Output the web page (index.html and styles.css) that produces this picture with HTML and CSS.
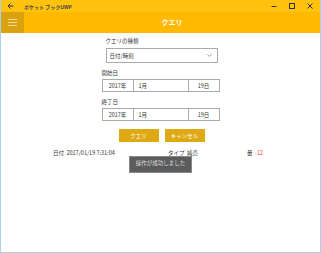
FILE: index.html
```html
<!DOCTYPE html>
<html lang="ja">
<head>
    <meta charset="UTF-8">
    <title>ポケット ブックUWP</title>
    <link rel="stylesheet" href="styles.css">
</head>
<body>
    <div class="window">
        <div class="titlebar">
            <svg class="back" width="7" height="6" viewBox="0 0 7 6"><path d="M6.5 3H1M3.5 0.5L1 3l2.5 2.5" stroke="#333" stroke-width="1" fill="none"/></svg>
            <span class="app-title">ポケット ブックUWP</span>
            <div class="controls">
                <svg width="6" height="6" viewBox="0 0 6 6"><path d="M0.5 3.5h5" stroke="#333" stroke-width="1"/></svg>
                <svg width="6" height="6" viewBox="0 0 6 6"><rect x="0.5" y="0.5" width="5" height="5" stroke="#333" stroke-width="1" fill="none"/></svg>
                <svg width="6" height="6" viewBox="0 0 6 6"><path d="M0.5 0.5l5 5M5.5 0.5l-5 5" stroke="#333" stroke-width="1"/></svg>
            </div>
        </div>
        <div class="header">
            <div class="hamburger">
                <svg width="9" height="7" viewBox="0 0 9 7"><path d="M0 0.5h9M0 3.5h9M0 6.5h9" stroke="#f3dc9a" stroke-width="1"/></svg>
            </div>
            <div class="page-title">クエリ</div>
        </div>

        <div class="content">
            <div class="form">
                <div class="type-group">
                    <div class="label">クエリの種類</div>
                    <div class="select">
                        <span>日付/時刻</span>
                        <svg width="5" height="3" viewBox="0 0 5 3"><path d="M0.3 0.3L2.5 2.5 4.7 0.3" stroke="#888" stroke-width="0.8" fill="none"/></svg>
                    </div>
                </div>
                <div class="label">開始日</div>
                <div class="date">
                    <div class="seg seg-year">2017年</div>
                    <div class="seg seg-month">1月</div>
                    <div class="seg seg-day">19日</div>
                </div>
                <div class="label">終了日</div>
                <div class="date">
                    <div class="seg seg-year">2017年</div>
                    <div class="seg seg-month">1月</div>
                    <div class="seg seg-day">19日</div>
                </div>
                <div class="buttons">
                    <button>クエリ</button>
                    <button>キャンセル</button>
                </div>
            </div>

            <div class="result">
                <div class="col col-date">日付&nbsp;&nbsp;2017/01/19 7:31:04</div>
                <div class="col col-type">タイプ&nbsp;&nbsp;純売<div class="note">ノート</div></div>
                <div class="col col-amount">量&nbsp;&nbsp;<span class="neg">-12</span></div>
            </div>
            <div class="toast">操作が成功しました</div>
        </div>
    </div>
</body>
</html>
```

FILE: styles.css
```css
body {
    margin: 0;
    font-family: "Noto Sans CJK JP", "Noto Sans", sans-serif;
    font-size: 5.5px;
    color: #333;
    background: #fff;
}
.window {
    width: 321px;
    height: 253px;
    box-sizing: border-box;
    border: 1px solid #a9d0ef;
    border-top: none;
    display: flex;
    flex-direction: column;
    overflow: hidden;
}
.titlebar {
    height: 12px;
    background-color: #ffc30f;
    display: flex;
    align-items: center;
    padding-left: 6px;
}
.back {
    margin-right: 10px;
}
.app-title {
    font-size: 5px;
    font-weight: bold;
    color: #444;
}
.controls {
    margin-left: auto;
    display: flex;
    gap: 12px;
    margin-right: 7px;
}
.header {
    height: 21px;
    background-color: #ffb900;
    display: flex;
}
.hamburger {
    width: 23px;
    background-color: #d9a20e;
    display: flex;
    align-items: center;
    justify-content: center;
}
.page-title {
    flex: 1;
    text-align: center;
    line-height: 21px;
    color: #fff;
    font-weight: bold;
    font-size: 7px;
}
.content {
    position: relative;
    flex: 1;
}
.form {
    width: 118px;
    margin: 0 auto;
    padding-top: 4px;
    display: flex;
    flex-direction: column;
}
.type-group {
    padding-left: 4px;
    margin-right: 2px;
}
.label {
    line-height: 8px;
}
.type-group .label {
    margin-bottom: 3px;
}
.select {
    height: 13px;
    border: 1px solid #aaa;
    display: flex;
    align-items: center;
    justify-content: space-between;
    padding: 0 5px 0 3px;
    margin-bottom: 6px;
}
.date {
    height: 11px;
    border: 1px solid #aaa;
    display: flex;
    margin-top: 2px;
    margin-bottom: 6px;
}
.seg {
    display: flex;
    align-items: center;
}
.seg-year {
    width: 30px;
    justify-content: center;
    border-right: 1px solid #aaa;
}
.seg-month {
    width: 49px;
    padding-left: 5px;
    border-right: 1px solid #aaa;
}
.seg-day {
    flex: 1;
    justify-content: center;
}
.buttons {
    display: flex;
    justify-content: center;
    gap: 6px;
    margin-left: 2px;
    margin-top: 2px;
}
button {
    width: 40px;
    height: 13px;
    border: none;
    background-color: #dea912;
    color: #fff;
    font-family: inherit;
    font-size: 5.5px;
    padding: 0;
}
.result {
    display: flex;
    padding-left: 52px;
    margin-top: 7px;
}
.col-date {
    width: 115px;
}
.col-type {
    width: 79px;
}
.note {
    margin-top: 6px;
    text-indent: -16px;
}
.neg {
    color: #e53935;
}
.toast {
    position: absolute;
    left: 128px;
    top: 123px;
    width: 63px;
    height: 17px;
    line-height: 13px;
    text-align: center;
    background-color: rgba(70, 70, 70, 0.88);
    color: #ddd;
    border: 1px solid #888;
    box-sizing: border-box;
}
```
